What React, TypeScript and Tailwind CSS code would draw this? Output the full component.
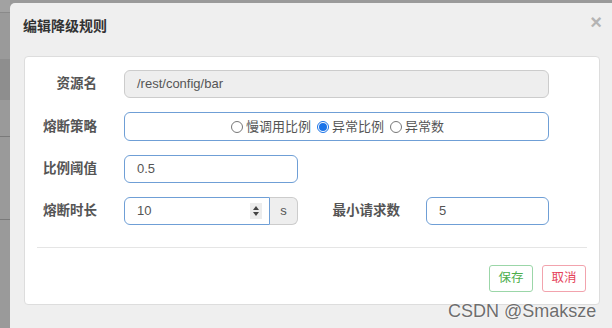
import React from "react";

const font = { fontFamily: '"Liberation Sans", "Noto Sans CJK SC", sans-serif' };

function Label({ children, w }: { children: React.ReactNode; w: string }) {
  return (
    <div className={`${w} shrink-0 text-right text-[13.5px] font-bold text-[#555] leading-[28px]`}>{children}</div>
  );
}

function Radio({ checked, label }: { checked?: boolean; label: string }) {
  return (
    <div className="flex items-center">
      {checked ? (
        <span className="w-[12px] h-[12px] rounded-full border border-[#1a73e8] flex items-center justify-center bg-white">
          <span className="w-[8px] h-[8px] rounded-full bg-[#1a73e8]" />
        </span>
      ) : (
        <span className="w-[12px] h-[12px] rounded-full border border-[#777] bg-white" />
      )}
      <span className="ml-[3px] text-[13px] text-[#555]">{label}</span>
    </div>
  );
}

export default function App() {
  return (
    <div className="relative w-[612px] h-[328px] overflow-hidden bg-[#9a9a9a]" style={font}>
      {/* background page strip */}
      <div className="flex flex-col w-[10px] h-full">
        <div className="h-[13px] bg-[#a2a2a2] border-b border-[#8a8a8a]" />
        <div className="h-[46px]" />
        <div className="h-[41px] bg-[#8e8e8e]" />
        <div className="h-[37px] border-b border-[#7a7a7a]" />
        <div className="h-[83px] border-b border-[#7a7a7a]" />
      </div>

      {/* modal */}
      <div className="absolute left-[10px] top-[3px] w-[610px] h-[340px] bg-[#efefef] rounded-tl-[5px]">
        <div className="h-[53px] flex items-start justify-between pl-[13px] pr-[18px] pt-[13px]">
          <div className="text-[14px] font-bold text-[#333] leading-[20px]">编辑降级规则</div>
          <div className="text-[20px] font-bold text-[#b4b4b4] leading-[20px] -mt-[4px]">×</div>
        </div>

        <div className="ml-[14px] w-[576px] h-[249px] bg-white border border-[#ddd] rounded-[4px] pt-[13px]">
          <div className="flex flex-col gap-[14px]">
            {/* row 1 */}
            <div className="flex items-center">
              <Label w="w-[72px]">资源名</Label>
              <div className="ml-[27px] w-[425px] h-[28px] bg-[#eee] border border-[#ccc] rounded-[6px] flex items-center pl-[12px] text-[13px] text-[#555]">
                /rest/config/bar
              </div>
            </div>
            {/* row 2 */}
            <div className="flex items-center">
              <Label w="w-[72px]">熔断策略</Label>
              <div className="ml-[27px] w-[425px] h-[29px] bg-white border border-[#6f9fd6] rounded-[6px] flex items-center justify-center gap-[6px] pl-[2px]">
                <Radio label="慢调用比例" />
                <Radio checked label="异常比例" />
                <Radio label="异常数" />
              </div>
            </div>
            {/* row 3 */}
            <div className="flex items-center">
              <Label w="w-[72px]">比例阈值</Label>
              <div className="ml-[27px] w-[174px] h-[28px] bg-white border border-[#6f9fd6] rounded-[6px] flex items-center pl-[12px] text-[13px] text-[#555]">
                0.5
              </div>
            </div>
            {/* row 4 */}
            <div className="flex items-center">
              <Label w="w-[72px]">熔断时长</Label>
              <div className="ml-[27px] flex h-[28px]">
                <div className="w-[146px] h-full bg-white border border-[#6f9fd6] rounded-l-[6px] flex items-center justify-between pl-[12px] pr-[7px] text-[13px] text-[#555]">
                  <span>10</span>
                  <span className="w-[12px] h-[16px] bg-[#ececec] flex flex-col items-center justify-center gap-[2px]">
                    <span className="w-0 h-0 border-l-[3.5px] border-r-[3.5px] border-b-[4px] border-l-transparent border-r-transparent border-b-[#444]" />
                    <span className="w-0 h-0 border-l-[3.5px] border-r-[3.5px] border-t-[4px] border-l-transparent border-r-transparent border-t-[#444]" />
                  </span>
                </div>
                <div className="w-[28px] h-full bg-[#eee] border border-l-0 border-[#ccc] rounded-r-[6px] flex items-center justify-center text-[13px] text-[#555]">
                  s
                </div>
              </div>
              <Label w="w-[102px]">最小请求数</Label>
              <div className="ml-[26px] w-[123px] h-[28px] bg-white border border-[#6f9fd6] rounded-[6px] flex items-center pl-[12px] text-[13px] text-[#555]">
                5
              </div>
            </div>
          </div>

          <div className="mx-[12px] mt-[22px] border-t border-[#e5e5e5]" />

          <div className="flex justify-end gap-[9px] pr-[13px] mt-[17px]">
            <div className="w-[44px] h-[27px] border border-[#9bd6a8] rounded-[3px] flex items-center justify-center text-[12.5px] text-[#4cae4c]">
              保存
            </div>
            <div className="w-[44px] h-[27px] border border-[#f2a3ad] rounded-[3px] flex items-center justify-center text-[12.5px] text-[#e5435a]">
              取消
            </div>
          </div>
        </div>
      </div>

      {/* watermark */}
      <div
        className="absolute left-[448px] top-[299px] text-[18px] leading-[24px] text-[#6e6e6e]"
        style={{ textShadow: "0 0 2px #fff, 0 0 1px #fff" }}
      >
        CSDN @Smaksze
      </div>
    </div>
  );
}
